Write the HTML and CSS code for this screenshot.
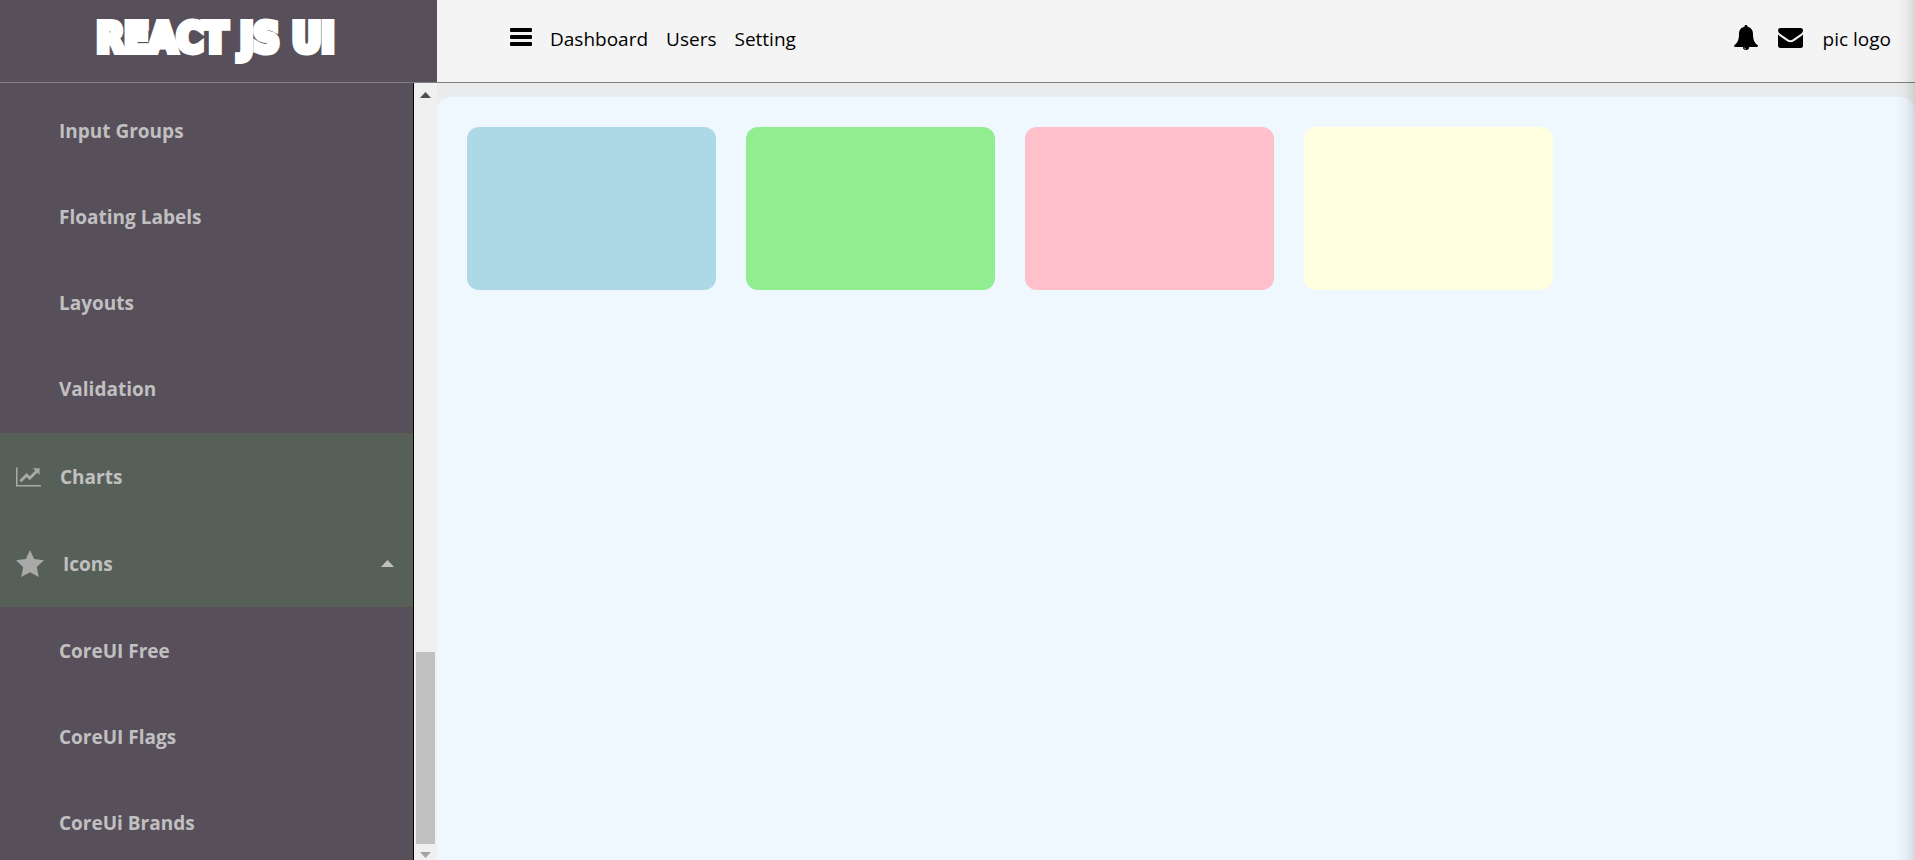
FILE: index.html
```html
<!DOCTYPE html>
<html lang="en">
<head>
<meta charset="utf-8">
<title>React JS UI</title>
<link rel="stylesheet" href="styles.css">
</head>
<body>
<div class="app">
  <header class="header">
    <div class="brand">REACT JS UI</div>
    <div class="topbar">
      <nav class="nav">
        <button class="icon-button" type="button" aria-label="Toggle menu">
          <svg width="22" height="19" viewBox="0 0 22 19"><path d="M1 0h20q1 0 1 1v2q0 1-1 1H1Q0 4 0 3V1Q0 0 1 0zM1 7h20q1 0 1 1v2q0 1-1 1H1q-1 0-1-1V8q0-1 1-1zM1 14h20q1 0 1 1v2q0 1-1 1H1q-1 0-1-1v-2q0-1 1-1z"/></svg>
        </button>
        <a href="#">Dashboard</a>
        <a href="#">Users</a>
        <a href="#">Setting</a>
      </nav>
      <div class="tools">
        <button class="icon-button" type="button" aria-label="Notifications">
          <svg width="24" height="26" viewBox="0 0 24 26"><path d="M12 0c1 0 1.600.7 1.500 1.700C17.500 2.500 19 5.500 19 9c0 6 1.500 9 5 11.500 0 .9-.7 1.500-1.500 1.500h-7.200a3.400 3.400 0 0 1-6.600 0H1.500C.7 22 0 21.400 0 20.500 3.500 18 5 15 5 9c0-3.500 1.500-6.500 5.500-7.300C10.400.7 11 0 12 0z"/><path d="M9 22h6a3 3 0 0 1-6 0z"/><path d="M10 22.300c.2 1 1 1.600 2 1.700" fill="none" stroke="#f4f4f4" stroke-width=".6"/></svg>
        </button>
        <button class="icon-button" type="button" aria-label="Messages">
          <svg width="25" height="20" viewBox="0 0 25 20"><path d="M2.500 0h20Q25 0 25 2.500q0 1.800-2 3.300l-8.300 5.700q-2.200 1.500-4.400 0L2 5.800Q0 4.300 0 2.500 0 0 2.500 0z"/><path d="M0 6.500q.7.800 1.600 1.400l7.600 5.300q3.300 2.300 6.600 0l7.600-5.300q.9-.6 1.600-1.400v11q0 2.500-2.500 2.500h-20Q0 20 0 17.500z"/></svg>
        </button>
        <span>pic logo</span>
      </div>
    </div>
  </header>
  <div class="body">
    <aside class="sidebar">
      <nav class="menu">
        <div class="submenu">
          <a href="#">Input Groups</a>
          <a href="#">Floating Labels</a>
          <a href="#">Layouts</a>
          <a href="#">Validation</a>
        </div>
        <a class="menu-item" href="#">
          <svg width="25" height="20" viewBox="0 0 26 20"><path d="M0 0h1.600v18.200H26V20H0z"/><path d="M4.500 14.500 11 8l3.300 3.300L21.500 4" fill="none" stroke="#a9a9a9" stroke-width="3"/><path d="M17.500 1h7v7z"/></svg>
          <span>Charts</span>
        </a>
        <a class="menu-item" href="#">
          <svg width="28" height="27" viewBox="0 0 28 27"><path d="m14 0 4.200 9 9.800 1.200-7.200 6.700L22.800 27 14 22.200 5.200 27l2-10.100L0 10.200 9.800 9z"/></svg>
          <span>Icons</span>
          <svg class="caret" width="13" height="7" viewBox="0 0 13 7"><path d="M6.500 0 13 7H0z"/></svg>
        </a>
        <div class="submenu">
          <a href="#">CoreUI Free</a>
          <a href="#">CoreUI Flags</a>
          <a href="#">CoreUi Brands</a>
        </div>
      </nav>
      <div class="scrollbar">
        <svg width="11" height="6" viewBox="0 0 11 6"><path d="M5.500 0 11 6H0z" fill="#505050"/></svg>
        <div class="thumb"></div>
        <svg width="11" height="6" viewBox="0 0 11 6"><path d="M5.500 6 11 0H0z" fill="#a3a3a3"/></svg>
      </div>
    </aside>
    <main class="main">
      <div class="panel">
        <div class="card blue"></div>
        <div class="card green"></div>
        <div class="card pink"></div>
        <div class="card yellow"></div>
      </div>
    </main>
  </div>
  <div class="edge-shade"></div>
</div>
</body>
</html>
```
FILE: styles.css
```css
* { box-sizing: border-box; }

body {
  margin: 0;
  font-family: "Open Sans", "Noto Sans", sans-serif;
  color: #000;
}

a { color: inherit; text-decoration: none; }
svg { display: block; flex: none; fill: currentColor; }

.app {
  position: relative;
  display: flex;
  flex-direction: column;
  height: 100vh;
  overflow: hidden;
  background: #ebeced;
}

.header {
  display: flex;
  flex: none;
  border-bottom: 1px solid #808080;
  background: #f4f4f4;
}

.brand {
  flex: 0 0 437px;
  padding: 8px 6px 14px 0;
  background: #574f5a;
  color: #fff;
  font-family: "DejaVu Sans Condensed", "DejaVu Sans", sans-serif;
  font-size: 40px;
  font-weight: 700;
  line-height: 60px;
  text-align: center;
  -webkit-text-stroke: 6px #fff;
  stroke-linejoin: round;
}

.topbar {
  display: flex;
  flex: 1;
  justify-content: space-between;
  padding: 0 24px 4px 73px;
  font-size: 19px;
}

.nav, .tools {
  display: flex;
  align-items: center;
  gap: 20px;
}

.nav { gap: 18px; }

.icon-button {
  padding: 0 0 3px;
  border: 0;
  background: none;
  color: #000;
}

.body {
  display: flex;
  flex: 1;
  min-height: 0;
}

.sidebar {
  display: flex;
  flex: 0 0 437px;
  min-height: 0;
}

.menu {
  flex: 1;
  overflow: hidden;
  padding-top: 4px;
  border-right: 1px solid #000;
  background: #574f5a;
  color: #c0c0c0;
  font-size: 19px;
  font-weight: 700;
  line-height: 26px;
}

.submenu { padding: 1px 0; }

.submenu a {
  display: block;
  padding: 30px 59px;
}

.menu-item {
  display: flex;
  align-items: center;
  gap: 19px;
  height: 87px;
  padding: 0 19px 0 16px;
  background: #566058;
}

.menu-item svg { color: #a9a9a9; }
.menu-item .caret { margin-left: auto; color: #c0c0c0; }

.scrollbar {
  display: flex;
  flex: 0 0 23px;
  flex-direction: column;
  align-items: center;
  padding: 9px 2px 2px;
  background: #f0f0f0;
}

.thumb {
  width: 19px;
  height: 192px;
  margin: auto 0 8px;
  background: #c1c1c1;
}

.main {
  display: flex;
  flex: 1;
  padding-top: 14px;
}

.panel {
  display: flex;
  flex: 1;
  align-items: flex-start;
  gap: 30px;
  padding: 30px;
  border-radius: 14px 14px 0 0;
  background: #eff7ff;
}

.card {
  width: 13vw;
  height: 163px;
  border-radius: 12px;
}

.blue { background: #add8e6; }
.green { background: #90ee90; }
.pink { background: #ffc0cb; }
.yellow { background: #ffffe0; }

.edge-shade {
  position: absolute;
  top: 0;
  right: 0;
  bottom: 0;
  width: 20px;
  background: linear-gradient(to right, rgba(0, 0, 0, 0), rgba(0, 0, 0, 0.03) 50%, rgba(0, 0, 0, 0.12));
  pointer-events: none;
}
```
